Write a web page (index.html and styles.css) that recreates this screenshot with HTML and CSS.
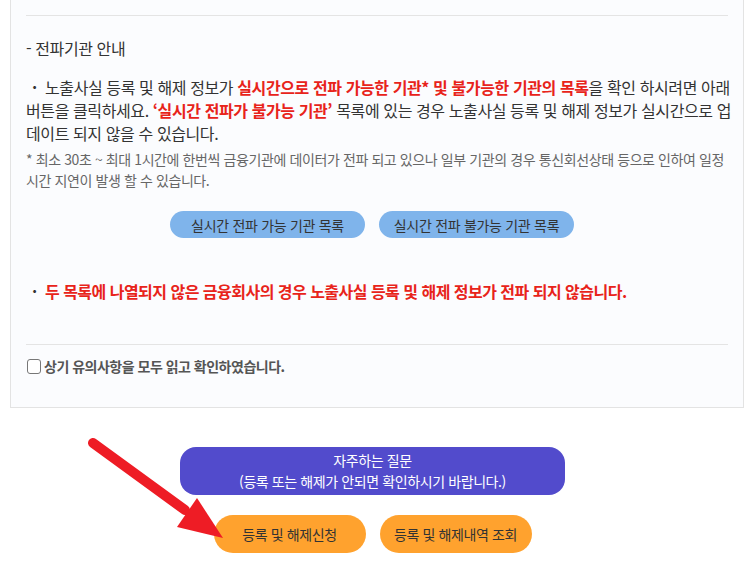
FILE: index.html
```html
<!DOCTYPE html>
<html lang="ko">
<head>
<meta charset="utf-8">
<title>전파기관 안내</title>
<link rel="stylesheet" href="styles.css">
</head>
<body>
<div class="panel">
  <hr class="rule rule-top">
  <p class="heading">- 전파기관 안내</p>
  <p class="notice"><span class="dot">·</span>노출사실 등록 및 해제 정보가 <b class="red">실시간으로 전파 가능한 기관* 및 불가능한 기관의 목록</b>을 확인 하시려면 아래<br>버튼을 클릭하세요. <b class="red">‘실시간 전파가 불가능 기관’</b> 목록에 있는 경우 노출사실 등록 및 해제 정보가 실시간으로 업<br>데이트 되지 않을 수 있습니다.</p>
  <p class="small">* 최소 30초 ~ 최대 1시간에 한번씩 금융기관에 데이터가 전파 되고 있으나 일부 기관의 경우 통신회선상태 등으로 인하여 일정<br>시간 지연이 발생 할 수 있습니다.</p>
  <div class="list-buttons">
    <button class="btn-blue">실시간 전파 가능 기관 목록</button>
    <button class="btn-blue">실시간 전파 불가능 기관 목록</button>
  </div>
  <p class="warning"><span class="dot dot-dark">·</span>두 목록에 나열되지 않은 금융회사의 경우 노출사실 등록 및 해제 정보가 전파 되지 않습니다.</p>
  <hr class="rule rule-bottom">
  <label class="agree"><input type="checkbox" class="check"><span>상기 유의사항을 모두 읽고 확인하였습니다.</span></label>
</div>
<div class="actions">
  <button class="btn-faq">자주하는 질문<br>(등록 또는 해제가 안되면 확인하시기 바랍니다.)</button>
  <div class="action-row">
    <button class="btn-orange">등록 및 해제신청</button>
    <button class="btn-orange">등록 및 해제내역 조회</button>
  </div>
  <svg class="arrow" width="150" height="110" viewBox="0 0 150 110" aria-hidden="true">
    <line x1="13" y1="13" x2="105" y2="80" stroke="#ee1c25" stroke-width="10" stroke-linecap="round"/>
    <polygon points="117,68 97,97 143,108" fill="#ee1c25"/>
  </svg>
</div>
</body>
</html>
```
FILE: styles.css
```css
html, body {
  margin: 0;
  padding: 0;
  background: #ffffff;
}
body {
  font-family: "Noto Sans CJK KR", "Noto Sans", sans-serif;
  color: #333333;
  width: 755px;
  height: 566px;
  overflow: hidden;
  position: relative;
}
p { margin: 0; }
.panel {
  margin-left: 10px;
  width: 702px;
  padding: 15px 15px 0 15px;
  height: 392px;
  background: #fbfcfe;
  border: 1px solid #e3e3e3;
  border-top: none;
}
.rule {
  border: none;
  border-top: 1px solid #e4e4e4;
  margin: 0;
  height: 0;
}
.heading {
  margin-top: 21px;
  font-size: 16px;
  line-height: 22px;
  letter-spacing: -0.4px;
}
.notice {
  margin-top: 17px;
  font-size: 16px;
  line-height: 23px;
  letter-spacing: -0.4px;
  white-space: nowrap;
}
.dot {
  display: inline-block;
  width: 19px;
  padding-left: 6px;
  box-sizing: border-box;
  font-weight: bold;
}
.red { color: #e8231a; font-weight: bold; }
.small {
  margin-top: 4px;
  font-size: 14px;
  line-height: 21px;
  color: #666666;
  letter-spacing: -0.4px;
  white-space: nowrap;
}
.list-buttons {
  display: flex;
  justify-content: center;
  gap: 14px;
  margin-top: 20px;
  margin-right: 10px;
}
.btn-blue {
  width: 195px;
  height: 27px;
  border: none;
  border-radius: 14px;
  background: #7fb4eb;
  color: #333333;
  font-family: inherit;
  font-size: 14px;
  letter-spacing: -0.3px;
  padding: 0;
}
.warning {
  margin-top: 42px;
  font-size: 16px;
  line-height: 23px;
  color: #e8231a;
  font-weight: bold;
  letter-spacing: -0.52px;
  white-space: nowrap;
}
.dot-dark { color: #333333; }
.rule-bottom { margin-top: 41px; }
.agree {
  display: flex;
  align-items: center;
  margin-top: 11px;
  font-size: 14px;
  font-weight: bold;
  color: #555555;
  letter-spacing: -0.5px;
  line-height: 20px;
}
.check {
  appearance: none;
  -webkit-appearance: none;
  width: 14px;
  height: 15px;
  margin: 0 3px 0 1px;
  border: 1px solid #777777;
  border-radius: 3px;
  background: #ffffff;
  box-sizing: border-box;
}
.actions {
  width: 745px;
  display: flex;
  flex-direction: column;
  align-items: center;
  margin-top: 39px;
}
.btn-faq {
  width: 385px;
  height: 48px;
  border: none;
  border-radius: 16px;
  background: #524bcc;
  color: #ffffff;
  font-family: inherit;
  font-size: 14px;
  line-height: 21px;
  letter-spacing: -0.4px;
  padding: 0;
}
.action-row {
  display: flex;
  gap: 14px;
  margin-top: 20px;
}
.btn-orange {
  width: 152px;
  height: 38px;
  border: none;
  border-radius: 19px;
  background: #ffa22e;
  color: #333333;
  font-family: inherit;
  font-size: 14px;
  letter-spacing: -0.4px;
  padding: 0;
}
.arrow {
  position: absolute;
  left: 80px;
  top: 430px;
}
```
